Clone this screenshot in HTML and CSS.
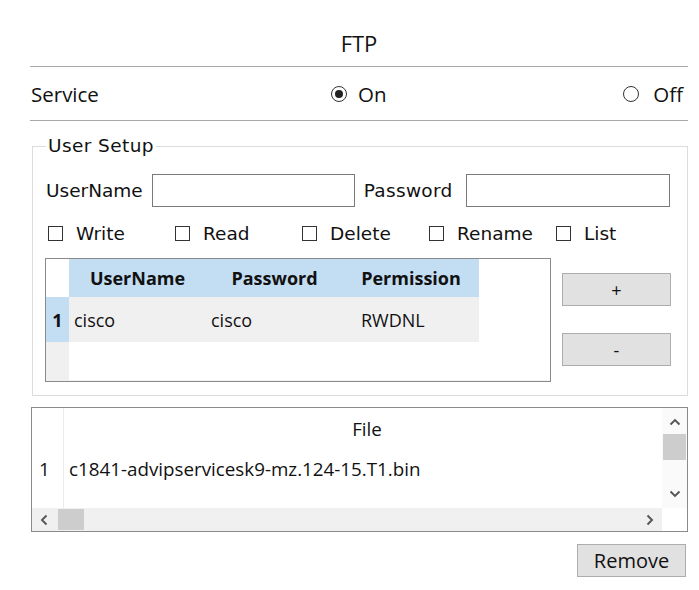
FILE: index.html
```html
<!DOCTYPE html>
<html>
<head>
<meta charset="utf-8">
<link rel="stylesheet" href="styles.css">
</head>
<body>
<div class="panel">
  <div class="title">FTP</div>
  <div class="service">
    <span class="svc-label">Service</span>
    <span class="radio"><span class="rb on"></span>On</span>
    <span class="spacer"></span>
    <span class="radio"><span class="rb"></span>Off</span>
  </div>
  <fieldset class="group">
    <legend>User Setup</legend>
    <div class="cred">
      <span class="lbl">UserName</span><span class="inp"></span>
      <span class="lbl pw">Password</span><span class="inp"></span>
    </div>
    <div class="perms">
      <span class="cb"><span class="box"></span>Write</span>
      <span class="cb"><span class="box"></span>Read</span>
      <span class="cb"><span class="box"></span>Delete</span>
      <span class="cb"><span class="box"></span>Rename</span>
      <span class="cb"><span class="box"></span>List</span>
    </div>
    <div class="users">
      <div class="utable">
        <span class="corner"></span>
        <span class="hcell">UserName</span>
        <span class="hcell">Password</span>
        <span class="hcell">Permission</span>
        <span class="blank"></span>
        <span class="rh sel">1</span>
        <span class="cell">cisco</span>
        <span class="cell">cisco</span>
        <span class="cell perm">RWDNL</span>
        <span class="blank"></span>
        <span class="rh"></span>
        <span class="blank wide"></span>
      </div>
      <div class="ubtns">
        <button class="btn">+</button>
        <button class="btn">-</button>
      </div>
    </div>
  </fieldset>
  <div class="files">
    <div class="fbody">
      <span class="frh"></span>
      <span class="fhead">File</span>
      <span class="frh num">1</span>
      <span class="fcell">c1841-advipservicesk9-mz.124-15.T1.bin</span>
      <span class="frh"></span>
      <span class="fcell"></span>
    </div>
    <div class="vscroll">
      <svg class="arr" width="12" height="8" viewBox="0 0 12 8"><path d="M1.5 6.5 L6 2 L10.5 6.5" fill="none" stroke="#555" stroke-width="1.9"/></svg>
      <span class="vthumb"></span>
      <span class="vfill"></span>
      <svg class="arr" width="12" height="8" viewBox="0 0 12 8"><path d="M1.5 1.5 L6 6 L10.5 1.5" fill="none" stroke="#555" stroke-width="1.9"/></svg>
    </div>
    <div class="hscroll">
      <svg class="arr" width="8" height="12" viewBox="0 0 8 12"><path d="M6.5 1.5 L2 6 L6.5 10.5" fill="none" stroke="#555" stroke-width="1.9"/></svg>
      <span class="hthumb"></span>
      <span class="hfill"></span>
      <svg class="arr" width="8" height="12" viewBox="0 0 8 12"><path d="M1.5 1.5 L6 6 L1.5 10.5" fill="none" stroke="#555" stroke-width="1.9"/></svg>
    </div>
    <div class="scorner"></div>
  </div>
  <div class="actions"><button class="btn remove">Remove</button></div>
</div>
</body>
</html>
```

FILE: styles.css
```css
* { box-sizing: border-box; }
body {
  margin: 0;
  background: #ffffff;
  color: #111;
  font-family: "Open Sans", "Noto Sans", sans-serif;
}
.panel {
  margin-left: 30px;
  width: 658px;
}
.title {
  height: 67px;
  padding-top: 20px;
  display: flex;
  align-items: center;
  justify-content: center;
  font-size: 22px;
  border-bottom: 1px solid #a8a8a8;
}
.service {
  height: 54px;
  display: flex;
  align-items: center;
  font-size: 20.5px;
  border-bottom: 1px solid #a8a8a8;
  padding-top: 1px;
}
.svc-label { width: 301px; padding-left: 1px; }
.radio { display: flex; align-items: center; gap: 11px; }
.spacer { flex: 1; }
.radio:last-child { padding-right: 5px; gap: 14px; }
.rb {
  width: 16px; height: 16px;
  border: 1.5px solid #333;
  border-radius: 50%;
  display: flex; align-items: center; justify-content: center;
}
.rb.on::after {
  content: "";
  width: 8px; height: 8px;
  border-radius: 50%;
  background: #222;
}
.group {
  margin: 14px 0 0 2px;
  padding: 17px 15px 13px 12px;
  border: 1px solid #dcdcdc;
  font-family: "DejaVu Sans", Verdana, sans-serif;
  font-size: 18.5px;
  min-width: 0;
}
.group legend {
  padding: 0 2px;
  margin-left: 1px;
  line-height: 22px;
  letter-spacing: 0.4px;
}
.cred {
  display: flex;
  align-items: center;
  height: 33px;
}
.lbl { margin-left: 1px; margin-right: 9px; flex: none; }
.lbl.pw { margin-left: 9px; margin-right: 13px; letter-spacing: 0.3px; }
.inp {
  flex: none;
  width: 203px; height: 33px;
  border: 1px solid #7a7a7a;
  background: #fff;
}
.inp:last-child { width: 204px; }
.perms {
  display: grid;
  grid-template-columns: repeat(5, 127px);
  margin-top: 16px;
  padding-left: 3px;
  height: 17px;
  align-items: center;
}
.cb { display: flex; align-items: center; gap: 13px; }
.box {
  width: 15px; height: 15px;
  border: 1px solid #333;
  background: #fff;
}
.users {
  display: flex;
  align-items: flex-start;
  gap: 11px;
  margin-top: 18px;
}
.utable {
  width: 506px; height: 124px;
  border: 1px solid #8a8a8a;
  display: grid;
  grid-template-columns: 23px 137px 137px 136px 1fr;
  grid-template-rows: 38px 45px 1fr;
  font-family: "Open Sans", "Noto Sans", sans-serif;
  font-size: 18px;
}
.corner { background: #fff; }
.hcell {
  background: #c3ddf3;
  font-weight: 700;
  display: flex; align-items: center; justify-content: center;
  color: #111;
}
.blank { background: #fff; }
.blank.wide { grid-column: 2 / 6; border-bottom: 1px solid #f2f2f2; }
.rh { background: #f0f0f0; }
.rh.sel {
  background: #c3ddf3;
  font-weight: 700;
  display: flex; align-items: center; justify-content: center;
}
.cell {
  background: #f0f0f0;
  display: flex; align-items: center;
  padding-left: 5px;
}
.cell.perm { padding-left: 18px; }
.ubtns {
  display: flex;
  flex-direction: column;
  gap: 27px;
  padding-top: 15px;
}
.btn {
  width: 109px; height: 33px;
  background: #e1e1e1;
  border: 1px solid #adadad;
  border-radius: 0;
  font-family: "Open Sans", "Noto Sans", sans-serif;
  font-size: 18px;
  color: #111;
  padding: 0;
}
.files {
  margin-top: 11px;
  margin-left: 1px;
  width: 657px; height: 125px;
  border: 1px solid #8a8a8a;
  display: grid;
  grid-template-columns: 1fr 25px;
  grid-template-rows: 1fr 23px;
  font-family: "Open Sans", "Noto Sans", sans-serif;
  font-size: 18.8px;
}
.fbody {
  display: grid;
  grid-template-columns: 32px 1fr;
  grid-template-rows: 40px 42px 1fr;
}
.frh { border-right: 1px solid #ececec; }
.frh.num { display: flex; align-items: center; padding-left: 7px; }
.fhead { display: flex; align-items: center; justify-content: center; padding-left: 8px; padding-top: 1px; }
.fcell { display: flex; align-items: center; padding-left: 5px; }
.vscroll {
  background: #fafafa;
  display: flex;
  flex-direction: column;
  align-items: center;
}
.vscroll .arr { margin-top: 10px; }
.vscroll .arr:last-child { margin-top: 0; margin-bottom: 10px; }
.vthumb { width: 23px; height: 26px; background: #cdcdcd; margin-top: 8px; }
.vfill { flex: 1; }
.hscroll {
  background: #f0f0f0;
  display: flex;
  align-items: center;
}
.hscroll .arr { margin-left: 8px; }
.hscroll .arr:last-child { margin-left: 0; margin-right: 8px; }
.hthumb { width: 26px; height: 21px; background: #cdcdcd; margin-left: 10px; }
.hfill { flex: 1; }
.scorner { background: #fff; }
.actions {
  display: flex;
  justify-content: flex-end;
  margin-top: 12px;
  padding-right: 2px;
}
.remove { font-size: 20px; }
```
